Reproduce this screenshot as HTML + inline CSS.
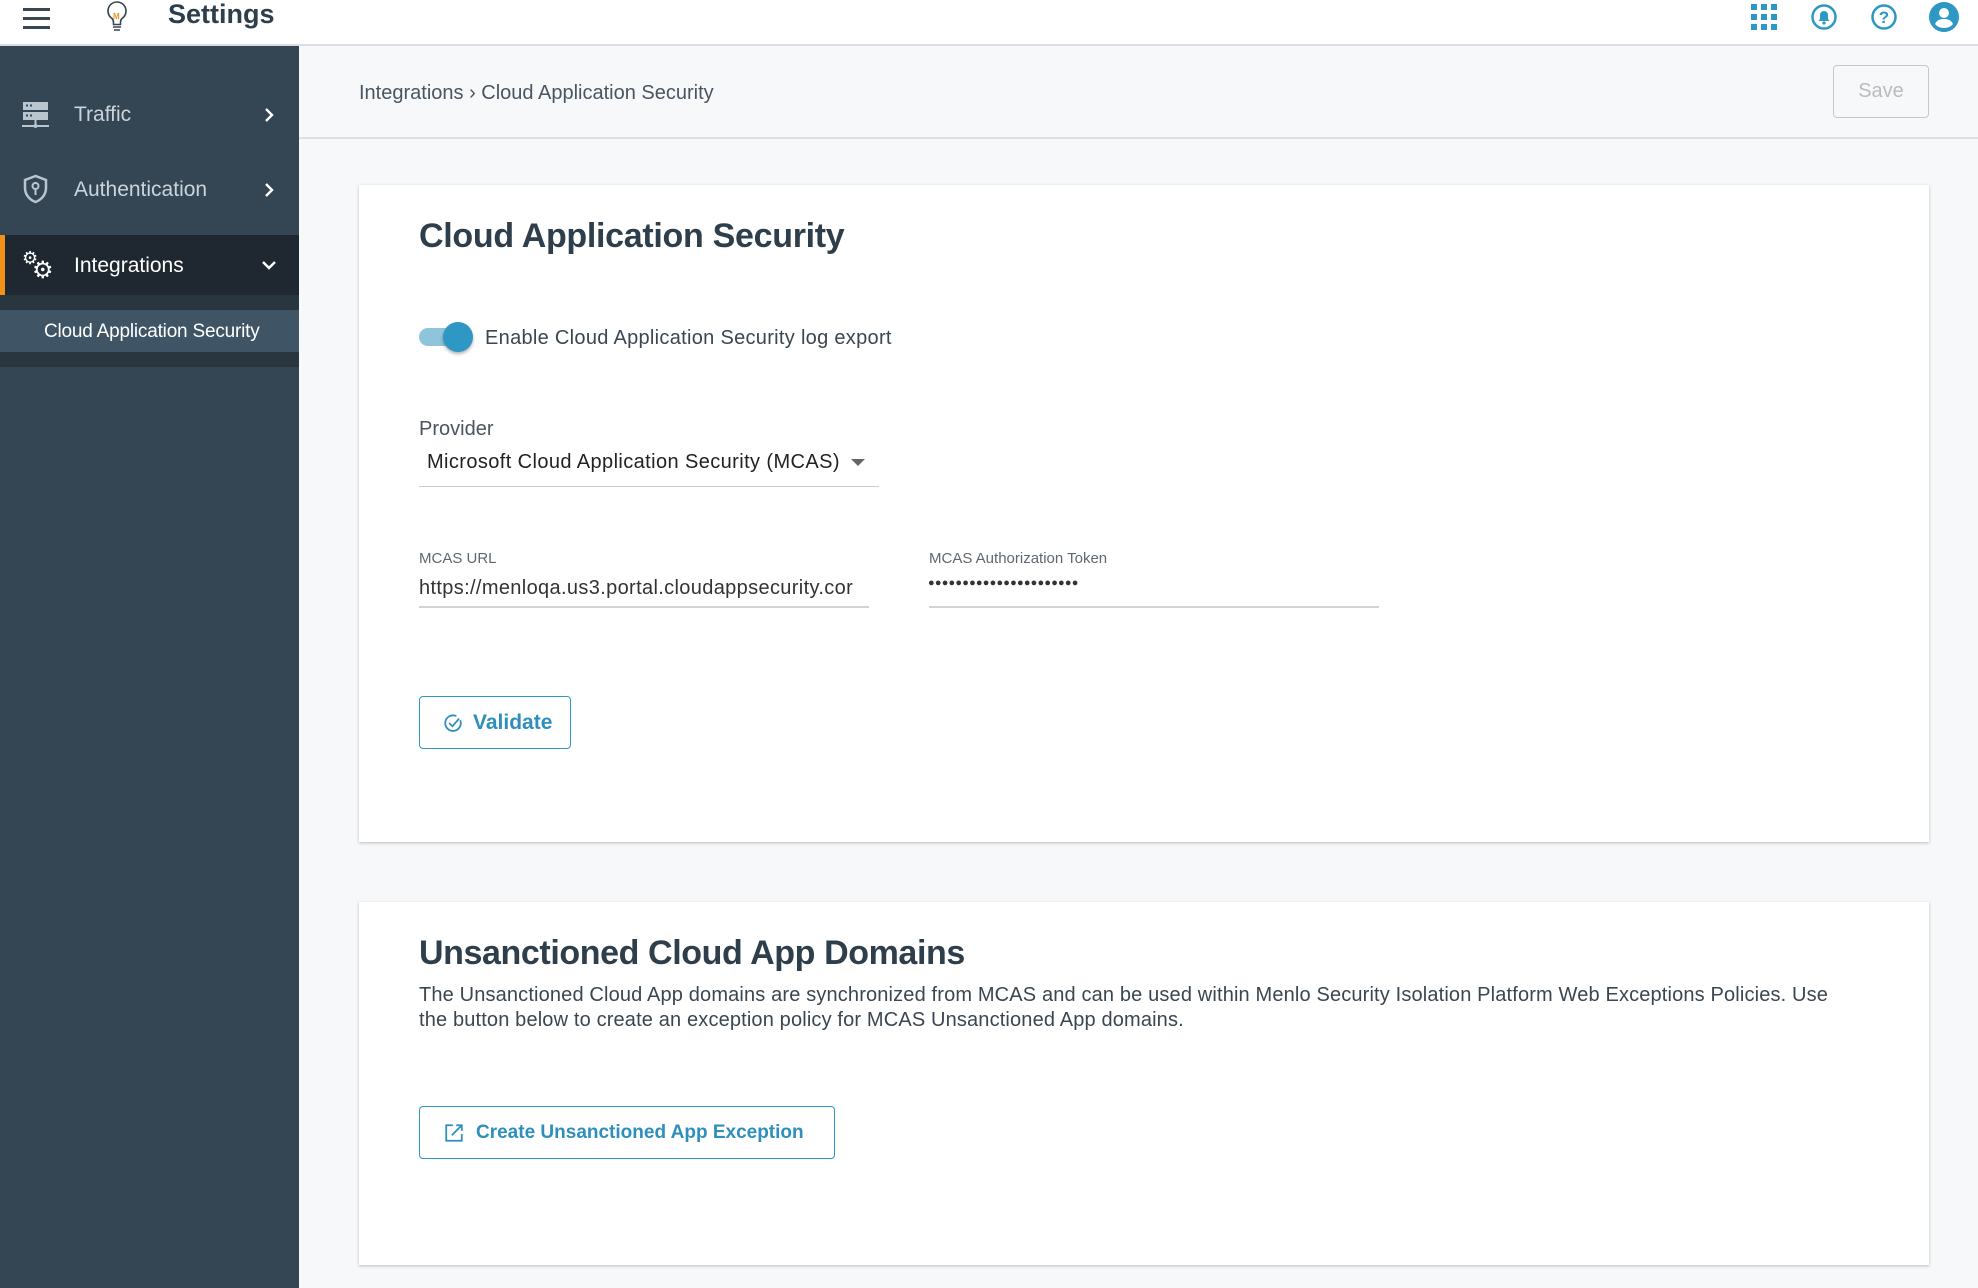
<!DOCTYPE html>
<html><head><meta charset="utf-8"><style>
*{box-sizing:border-box;margin:0;padding:0}
body{width:1978px;height:1288px;overflow:hidden;background:#f7f8fa;font-family:"Liberation Sans",Arial,sans-serif;color:#3a4650;position:relative}
.a{position:absolute;white-space:nowrap}
#hdr{position:absolute;left:0;top:0;width:1978px;height:46px;background:#fff;border-bottom:2px solid #d9dde1}
#side{position:absolute;left:0;top:46px;width:299px;height:1242px;background:#344654}
.nav{position:absolute;left:74px;font-size:21px;color:#c9d4dc}
.card{position:absolute;left:359px;width:1570px;background:#fff;box-shadow:0 1px 3px rgba(0,0,0,.25)}
.lbl{font-size:15px;color:#5f6870}
.btn{position:absolute;white-space:nowrap;border:1.5px solid #2e97c4;border-radius:4px;color:#2e8fbd;font-size:21px;font-weight:bold;display:flex;align-items:center;gap:10px}
.btn svg{flex:none}
</style></head><body>
<div id="hdr"></div>
<div class="a" style="left:23px;top:8px">
<div style="width:27px;height:3px;background:#3a4650;margin-bottom:6px"></div>
<div style="width:27px;height:3px;background:#3a4650;margin-bottom:6px"></div>
<div style="width:27px;height:3px;background:#3a4650"></div></div>
<svg class="a" style="left:105px;top:0" width="24" height="34" viewBox="0 0 24 34"><path d="M12 2a9 9 0 0 0-5 16.5c1 1 1.5 2.5 1.5 4v2h7v-2c0-1.5.5-3 1.5-4A9 9 0 0 0 12 2z" fill="none" stroke="#3a4650" stroke-width="1.6"/><text x="8" y="19" font-size="8" fill="#f0901e" font-family="Liberation Sans" font-weight="bold">M</text><path d="M8 27h8M9 30h6" stroke="#3a4650" stroke-width="1.6"/></svg>
<div class="a" style="left:168px;top:-1px;font-size:27px;font-weight:bold;color:#2f3e4b">Settings</div>
<svg class="a" style="left:1751px;top:4px" width="26" height="26"><g fill="#2e97c4"><rect x="0" y="0" width="6" height="6"/><rect x="10" y="0" width="6" height="6"/><rect x="20" y="0" width="6" height="6"/><rect x="0" y="10" width="6" height="6"/><rect x="10" y="10" width="6" height="6"/><rect x="20" y="10" width="6" height="6"/><rect x="0" y="20" width="6" height="6"/><rect x="10" y="20" width="6" height="6"/><rect x="20" y="20" width="6" height="6"/></g></svg>
<svg class="a" style="left:1810px;top:3px" width="28" height="28" viewBox="0 0 28 28"><circle cx="14" cy="14" r="11.5" fill="none" stroke="#2e97c4" stroke-width="2.5"/><path d="M8.5 18h11l-1.5-2v-4a4 4 0 0 0-8 0v4z" fill="#2e97c4"/><circle cx="14" cy="20" r="1.6" fill="#2e97c4"/></svg>
<svg class="a" style="left:1870px;top:3px" width="28" height="28" viewBox="0 0 28 28"><circle cx="14" cy="14" r="11.5" fill="none" stroke="#2e97c4" stroke-width="2.5"/><text x="14" y="20" text-anchor="middle" font-size="17" font-weight="bold" fill="#2e97c4" font-family="Liberation Sans">?</text></svg>
<svg class="a" style="left:1928px;top:1px" width="32" height="32" viewBox="0 0 32 32"><circle cx="16" cy="16" r="15" fill="#2e97c4"/><circle cx="16" cy="12" r="5" fill="#fff"/><path d="M7 23c2-4 5-5 9-5s7 1 9 5c-2 2.5-5 4-9 4s-7-1.5-9-4z" fill="#fff"/></svg>

<div id="side">
<svg class="a" style="left:22px;top:55px" width="27" height="28" viewBox="0 0 27 28"><rect x="1" y="1" width="25" height="8" fill="#b9c6cf"/><rect x="1" y="11" width="25" height="8" fill="#b9c6cf"/><rect x="4" y="3.5" width="2" height="2" fill="#344654"/><rect x="8" y="3.5" width="2" height="2" fill="#344654"/><rect x="4" y="13.5" width="2" height="2" fill="#344654"/><rect x="8" y="13.5" width="2" height="2" fill="#344654"/><path d="M13.5 19v5M0 25h27" stroke="#b9c6cf" stroke-width="2"/><circle cx="13.5" cy="25" r="2" fill="#b9c6cf"/></svg>
<div class="nav" style="top:57px">Traffic</div>
<svg class="a" style="left:263px;top:61px" width="12" height="16" viewBox="0 0 12 16"><path d="M3 2l6 6-6 6" fill="none" stroke="#fff" stroke-width="2.4"/></svg>
<svg class="a" style="left:23px;top:128px" width="25" height="30" viewBox="0 0 25 30"><path d="M12.5 2L2 6v8c0 7 5 12 10.5 14C18 26 23 21 23 14V6z" fill="none" stroke="#b9c6cf" stroke-width="2.5"/><circle cx="12.5" cy="12" r="3" fill="none" stroke="#b9c6cf" stroke-width="2"/><path d="M12.5 15v6" stroke="#b9c6cf" stroke-width="2"/></svg>
<div class="nav" style="top:132px">Authentication</div>
<svg class="a" style="left:263px;top:136px" width="12" height="16" viewBox="0 0 12 16"><path d="M3 2l6 6-6 6" fill="none" stroke="#fff" stroke-width="2.4"/></svg>
<div class="a" style="left:0;top:189px;width:299px;height:60px;background:#1f2830;border-left:5px solid #f29118"></div>
<div class="a" style="left:22px;top:202px;font-size:18px;color:#fff">⚙</div><div class="a" style="left:32px;top:210px;font-size:24px;color:#fff">⚙</div>
<div class="nav" style="top:208px;color:#fff">Integrations</div>
<svg class="a" style="left:261px;top:213px" width="16" height="12" viewBox="0 0 16 12"><path d="M2 3l6 6 6-6" fill="none" stroke="#fff" stroke-width="2.4"/></svg>
<div class="a" style="left:0;top:249px;width:299px;height:72px;background:#29363f"></div>
<div class="a" style="left:0;top:264px;width:299px;height:42px;background:#3f5565;color:#fff;font-size:19px;padding:11px 0 0 44px;letter-spacing:-0.2px">Cloud Application Security</div>
</div>

<div class="a" style="left:299px;top:46px;width:1679px;height:93px;border-bottom:2px solid #dde0e3"></div>
<div class="a" style="left:359px;top:82px;font-size:20px;color:#4a5560">Integrations › Cloud Application Security</div>
<div class="a" style="left:1833px;top:65px;width:96px;height:53px;border:1.5px solid #c6c9cc;border-radius:4px;color:#b8bcc0;font-size:20px;display:flex;align-items:center;justify-content:center">Save</div>

<div class="card" style="top:185px;height:657px">
<div class="a" style="left:60px;top:32px;font-size:34px;font-weight:bold;color:#2f3e4b;letter-spacing:-0.3px">Cloud Application Security</div>
<div class="a" style="left:60px;top:143px;width:46px;height:18px;border-radius:9px;background:#8fc5dc"></div>
<div class="a" style="left:84px;top:137px;width:30px;height:30px;border-radius:50%;background:#2e97c4;box-shadow:0 2px 3px rgba(0,0,0,.3)"></div>
<div class="a" style="left:126px;top:142px;font-size:20px;color:#3a4650;letter-spacing:0.3px">Enable Cloud Application Security log export</div>
<div class="a" style="left:60px;top:233px;font-size:20px;color:#4a5560">Provider</div>
<div class="a" style="left:68px;top:266px;font-size:20px;color:#222;letter-spacing:0.4px">Microsoft Cloud Application Security (MCAS)</div>
<div class="a" style="left:492px;top:274px;border-left:7px solid transparent;border-right:7px solid transparent;border-top:7px solid #666"></div>
<div class="a" style="left:60px;top:301px;width:460px;height:1px;background:#c9ced3"></div>
<div class="a lbl" style="left:60px;top:365px">MCAS URL</div>
<div class="a" style="left:60px;top:392px;font-size:20px;color:#333;letter-spacing:0.35px">https://menloqa.us3.portal.cloudappsecurity.cor</div>
<div class="a" style="left:60px;top:421px;width:450px;height:2px;background:#cfd3d7"></div>
<div class="a lbl" style="left:570px;top:365px">MCAS Authorization Token</div>
<div class="a" style="left:569px;top:392px;font-size:11px;color:#333;letter-spacing:0.2px">●●●●●●●●●●●●●●●●●●●●●●</div>
<div class="a" style="left:570px;top:421px;width:450px;height:2px;background:#cfd3d7"></div>
<div class="btn" style="left:60px;top:511px;width:152px;height:53px;padding-left:23px"><svg width="20" height="20" viewBox="0 0 18 18"><path d="M15.5 6.5A7 7 0 1 1 12 2.8" fill="none" stroke="#2e8fbd" stroke-width="1.6"/><path d="M5.5 9l3 3 6-7" fill="none" stroke="#2e8fbd" stroke-width="1.6"/></svg>Validate</div>
</div>

<div class="card" style="top:902px;height:363px">
<div class="a" style="left:60px;top:32px;font-size:34px;font-weight:bold;color:#2f3e4b;letter-spacing:-0.4px">Unsanctioned Cloud App Domains</div>
<div class="a" style="left:60px;top:81px;font-size:20px;color:#3a4650;line-height:25px;letter-spacing:0.15px">The Unsanctioned Cloud App domains are synchronized from MCAS and can be used within Menlo Security Isolation Platform Web Exceptions Policies. Use<br>the button below to create an exception policy for MCAS Unsanctioned App domains.</div>
<div class="btn" style="left:60px;top:204px;width:416px;height:53px;padding-left:24px;font-size:19px;gap:12px"><svg width="20" height="20" viewBox="0 0 18 18"><path d="M8 2H2v14h14v-6" fill="none" stroke="#2e8fbd" stroke-width="1.6"/><path d="M7 11l9-9M11 2h5v5" fill="none" stroke="#2e8fbd" stroke-width="1.6"/></svg>Create Unsanctioned App Exception</div>
</div>
</body></html>
